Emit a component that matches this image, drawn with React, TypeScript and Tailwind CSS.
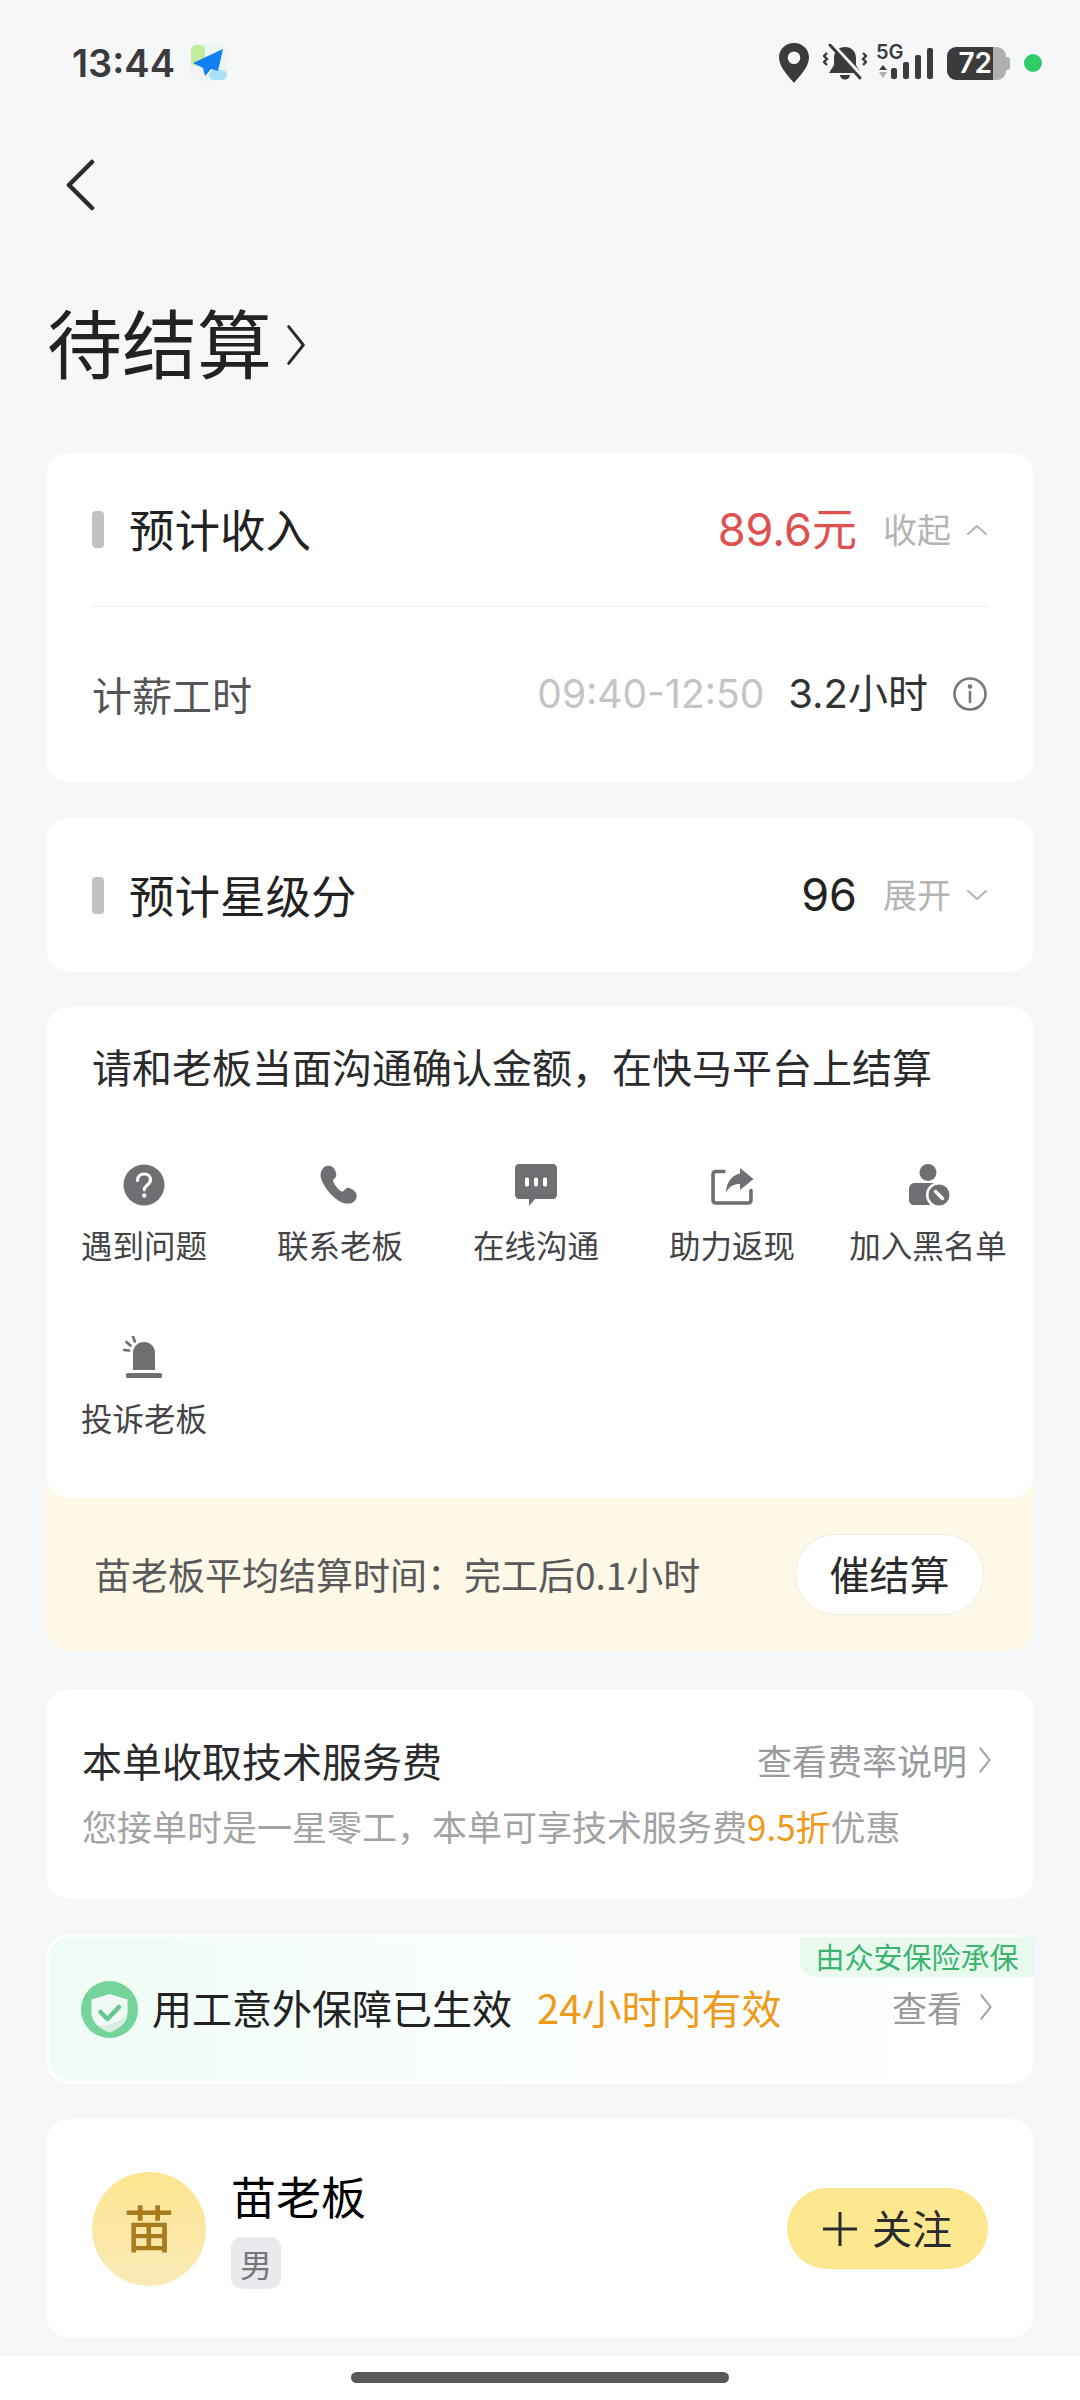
import React from 'react';

const FONT = '"Noto Sans CJK SC", "Noto Sans", sans-serif';

const Chevron = ({ className }: { className: string }) => (
  <svg viewBox="0 0 12 24" fill="none" stroke="currentColor" strokeWidth="1.6" strokeLinecap="round" strokeLinejoin="round" className={className}>
    <path d="M2 2l8 10-8 10" />
  </svg>
);

const Fold = ({ up }: { up?: boolean }) => (
  <svg viewBox="0 0 22 12" fill="none" stroke="#b4b4b6" strokeWidth="2" strokeLinecap="round" strokeLinejoin="round" className="w-[22px] h-[12px]">
    <path d={up ? 'M2 10l9-8 9 8' : 'M2 2l9 8 9-8'} />
  </svg>
);

const SectionTitle = ({ text }: { text: string }) => (
  <div className="flex items-center">
    <div className="w-[12px] h-[37px] rounded-[4px] bg-[#c1c2c6]" />
    <span className="ml-[25px] -mt-[3px] text-[45.500px] leading-[60px] text-[#222222]">{text}</span>
  </div>
);

const actionIcons: Record<string, React.ReactNode> = {
  question: (
    <>
      <circle cx="22" cy="22" r="20.500" fill="#6e6f73" />
      <path d="M15.500 17.500c0-4 3-6.500 6.700-6.500s6.300 2.400 6.300 5.700c0 5.300-6.200 5.200-6.200 10" fill="none" stroke="#fff" strokeWidth="3.200" strokeLinecap="round" />
      <circle cx="22.300" cy="32.500" r="2.200" fill="#fff" />
    </>
  ),
  phone: (
    <path d="M2.700 10C3.500 6.500 6 3.500 8.700 3c2.500-.5 5 .2 6.300 1.300 2 2 3.300 5.200 3.300 7.700 0 2-1.500 3.500-3.300 5 .2 1.800 1 3.500 2 5 1.800 2.800 4 5 6.700 6.700 1.800-.5 3.300-2 5-3.700 2.200-.5 4.500 .5 6.700 2.200 1.800 1.300 3.300 3 3.300 5.800 0 3.300-2.500 6-5 7-2.500.8-5.800 .8-8.300 0-4-1.300-9.800-5.500-13.700-10C7.500 25 4.500 20 3 15.500c-.5-1.800-.6-3.800-.3-5.500z" fill="#6e6f73" />
  ),
  chat: (
    <>
      <path d="M5 1h34c2.200 0 4 1.800 4 4v27c0 2.200-1.800 4-4 4H21l-6 7v-7H5c-2.200 0-4-1.800-4-4V5c0-2.200 1.800-4 4-4z" fill="#6e6f73" />
      <rect x="11" y="14.500" width="4" height="9" rx="1.500" fill="#fff" />
      <rect x="20" y="14.500" width="4" height="9" rx="1.500" fill="#fff" />
      <rect x="29" y="14.500" width="4" height="9" rx="1.500" fill="#fff" />
    </>
  ),
  share: (
    <>
      <path d="M14 8.500H6C4 8.500 3 9.500 3 11.500v25.500C3 39 4 40 6 40h32c2 0 3-1 3-3V27.500" fill="none" stroke="#6e6f73" strokeWidth="3.600" strokeLinecap="round" />
      <path d="M30 5l13.500 11L30 27v-6c-6 0-11 2-14 9 0-9 5-18 14-19.500z" fill="#6e6f73" />
    </>
  ),
  block: (
    <>
      <circle cx="22" cy="9.500" r="8.500" fill="#6e6f73" />
      <path d="M9 20h20c5 0 8 2 8 6v16H8c-3 0-5-2-5-5V26c0-3.500 2.500-6 6-6z" fill="#6e6f73" />
      <circle cx="33" cy="32" r="13" fill="#fff" />
      <circle cx="33" cy="32" r="10.500" fill="#6e6f73" />
      <path d="M29.500 28.500l7 7" stroke="#fff" strokeWidth="3.400" strokeLinecap="round" />
    </>
  ),
  alarm: (
    <>
      <path d="M11 34V17.500C11 10.500 15.500 6 22 6s11 4.500 11 11.500V34H11z" fill="#6e6f73" />
      <rect x="4" y="37" width="36" height="5" rx="1.500" fill="#6e6f73" />
      <path d="M10 1.500l1.800 5M3.500 7l4 3.500M1 15l5 .5" stroke="#6e6f73" strokeWidth="2.600" strokeLinecap="round" transform="translate(1 -1)" />
    </>
  ),
};

const actions = [
  { label: '遇到问题', icon: 'question' },
  { label: '联系老板', icon: 'phone' },
  { label: '在线沟通', icon: 'chat' },
  { label: '助力返现', icon: 'share' },
  { label: '加入黑名单', icon: 'block' },
  { label: '投诉老板', icon: 'alarm' },
];

const StatusBar = () => (
  <div className="h-[126px] pl-[72px] pr-[38px] flex items-center justify-between">
    <div className="flex items-center">
      <span className="text-[38px] leading-[44px] font-semibold text-[#3b3b3d]" style={{ fontFamily: 'Inter, sans-serif' }}>13:44</span>
      {/* app notification icon */}
      <svg viewBox="0 0 38 38" className="ml-[15px] w-[38px] h-[38px]">
        <rect x="0" y="0" width="37" height="37" rx="8" fill="#eef4f6" />
        <rect x="1" y="1" width="14" height="21" rx="5" fill="#c3ec9e" />
        <rect x="19" y="26" width="18" height="10" rx="5" fill="#a9e2f6" />
        <path d="M33 5L3 19l10 5 2 8 6-7 7 2z" fill="#1080f2" />
      </svg>
    </div>
    <div className="flex items-center">
      <svg viewBox="0 0 30 40" className="w-[30px] h-[40px]">
        <path fillRule="evenodd" fill="#3b3b3d" d="M15 0c8.500 0 15 6.300 15 14.500C30 24 20 34 15 40 10 34 0 24 0 14.500 0 6.300 6.500 0 15 0zm0 8.500a6.300 6.300 0 100 12.600 6.300 6.300 0 000-12.600z" />
      </svg>
      <svg viewBox="0 0 44 38" className="ml-[14px] w-[44px] h-[38px]">
        <path d="M22 3c6.500 0 11 4.500 11 11v7l5 8H6l5-8v-7c0-6.500 4.500-11 11-11zM17 31h10c0 2.500-2.200 4.500-5 4.500s-5-2-5-4.500z" fill="#3b3b3d" />
        <path d="M9 1l32 34" stroke="#f6f7f9" strokeWidth="5" />
        <path d="M7 1l30 33" stroke="#3b3b3d" strokeWidth="3" strokeLinecap="round" />
        <path d="M4 9l-3 3 3 3-3 3 3 3M40 9l3 3-3 3 3 3-3 3" fill="none" stroke="#3b3b3d" strokeWidth="2.400" />
      </svg>
      <div className="ml-[9px] relative w-[57px] h-[38px]">
        <svg viewBox="0 0 57 38" className="w-[57px] h-[38px]">
          <path d="M7 21l4 5H3z" fill="#3b3b3d" />
          <path d="M3 28h8l-4 6z" fill="#b0b0b2" />
          <rect x="15" y="24" width="6" height="11" rx="2" fill="#3b3b3d" />
          <rect x="27" y="18" width="6" height="17" rx="2" fill="#3b3b3d" />
          <rect x="39" y="11" width="6" height="24" rx="2" fill="#3b3b3d" />
          <rect x="51" y="4" width="6" height="31" rx="2" fill="#3b3b3d" />
        </svg>
        <span className="absolute left-0 top-[-3px] text-[20px] leading-[22px] font-semibold text-[#3b3b3d]" style={{ fontFamily: 'Inter, sans-serif' }}>5G</span>
      </div>
      <div className="ml-[14px] w-[63px] h-[33px] flex">
        <div className="w-[46px] rounded-l-[9px] bg-[#3b3b3d] text-white text-[28px] leading-[33px] font-semibold text-right pr-[1px]" style={{ fontFamily: 'Inter, sans-serif' }}>72</div>
        <div className="w-[13px] rounded-r-[9px] bg-[#b0b0b2]" />
        <div className="w-[4px] h-[13px] mt-[10px] rounded-r-[3px] bg-[#b0b0b2]" />
      </div>
      <div className="ml-[14px] w-[18px] h-[18px] rounded-full bg-[#2fcb69]" />
    </div>
  </div>
);

const App: React.FC = () => {
  return (
    <div className="w-[1080px] h-[2400px] bg-[#f6f7f9] flex flex-col overflow-hidden" style={{ fontFamily: FONT }}>
      <StatusBar />

      {/* Nav */}
      <div className="h-[118px] pl-[65px] flex items-center">
        <svg viewBox="0 0 30 52" fill="none" stroke="#2b2b2d" strokeWidth="4.500" strokeLinecap="round" strokeLinejoin="round" className="w-[30px] h-[52px]">
          <path d="M27 3L4 26l23 23" />
        </svg>
      </div>

      {/* Title */}
      <div className="h-[209px] pl-[47px] pb-[15px] flex items-center">
        <span className="text-[75px] leading-[90px] text-[#222222]">待结算</span>
        <Chevron className="ml-[13px] mt-[8px] w-[22px] h-[44px] text-[#2b2b2d]" />
      </div>

      <div className="px-[46px] flex flex-col gap-[36px]">
        {/* 预计收入 */}
        <div className="h-[329px] bg-white rounded-[24px]">
          <div className="h-[154px] mx-[46px] flex items-center justify-between border-b border-[#efeff1]">
            <SectionTitle text="预计收入" />
            <div className="flex items-center">
              <span className="text-[45px] leading-[60px] text-[#e0504f]" style={{ fontFamily: 'Inter, "Noto Sans CJK SC", sans-serif' }}>89.6元</span>
              <span className="ml-[26px] -mt-[2px] text-[34px] leading-[48px] text-[#b4b4b6]">收起</span>
              <span className="ml-[15px] flex"><Fold up /></span>
            </div>
          </div>
          <div className="h-[175px] mx-[46px] pb-[2px] flex items-center justify-between">
            <span className="text-[40px] leading-[52px] text-[#555558]">计薪工时</span>
            <div className="flex items-center">
              <span className="text-[39px] leading-[52px] text-[#c4c4c6]" style={{ fontFamily: 'Inter, sans-serif' }}>09:40-12:50</span>
              <span className="ml-[24px] text-[40px] leading-[52px] text-[#333335]" style={{ fontFamily: 'Inter, "Noto Sans CJK SC", sans-serif' }}>3.2小时</span>
              <svg viewBox="0 0 36 36" fill="none" stroke="#77787c" strokeWidth="2.600" strokeLinecap="round" className="ml-[24px] w-[36px] h-[36px]">
                <circle cx="18" cy="18" r="15.500" />
                <path d="M18 16v10" />
                <circle cx="18" cy="10.500" r="1" fill="#77787c" />
              </svg>
            </div>
          </div>
        </div>

        {/* 预计星级分 */}
        <div className="h-[154px] px-[46px] bg-white rounded-[24px] flex items-center justify-between">
          <SectionTitle text="预计星级分" />
          <div className="flex items-center">
            <span className="text-[45px] leading-[60px] text-[#222222]" style={{ fontFamily: 'Inter, sans-serif' }}>96</span>
            <span className="ml-[26px] -mt-[2px] text-[34px] leading-[48px] text-[#b4b4b6]">展开</span>
            <span className="ml-[15px] flex"><Fold /></span>
          </div>
        </div>

        {/* 结算操作 */}
        <div className="-mt-[1px] rounded-[24px] bg-[#fef8e6]">
          <div className="h-[491px] bg-white rounded-[24px]">
            <div className="h-[156px] pl-[46px] pt-[30px] text-[40px] leading-[58px] text-[#2b2b2d]">请和老板当面沟通确认金额，在快马平台上结算</div>
            <div className="grid grid-cols-5 w-[980px] gap-y-[63px]">
              {actions.map(a => (
                <div key={a.label} className="h-[110px] flex flex-col items-center">
                  <svg viewBox="0 0 44 44" className="w-[44px] h-[44px]">{actionIcons[a.icon]}</svg>
                  <span className="mt-[16px] text-[31.500px] leading-[42px] text-[#444447] whitespace-nowrap">{a.label}</span>
                </div>
              ))}
            </div>
          </div>
          <div className="h-[153px] pl-[48px] pr-[50px] flex items-center justify-between">
            <span className="text-[37px] leading-[48px] -mt-[2px] text-[#59595b]">苗老板平均结算时间：完工后0.1小时</span>
            <div className="w-[189px] h-[81px] pb-[3px] rounded-full bg-white border border-[#efece3] flex items-center justify-center text-[40px] text-[#2b2b2d]">催结算</div>
          </div>
        </div>
      </div>

      <div className="px-[46px] mt-[38px] flex flex-col gap-[35px]">
        {/* 技术服务费 */}
        <div className="h-[210px] bg-white rounded-[24px] pl-[36px] pr-[42px] pt-[44px]">
          <div className="flex items-center justify-between h-[54px]">
            <span className="text-[40px] leading-[54px] text-[#2b2b2d]">本单收取技术服务费</span>
            <div className="flex items-center">
              <span className="text-[35px] leading-[48px] text-[#9a9a9d]">查看费率说明</span>
              <Chevron className="ml-[11px] w-[14px] h-[28px] text-[#9a9a9d]" />
            </div>
          </div>
          <div className="mt-[14px] text-[35px] leading-[50px] text-[#a3a3a6]">
            您接单时是一星零工，本单可享技术服务费<span className="text-[#f09a1a]">9.5折</span>优惠
          </div>
        </div>

        {/* 意外保障 */}
        <div className="relative h-[150px] rounded-[24px] border-[3px] border-white bg-gradient-to-r from-[#f0fcf6] via-[#fafefc] to-white flex items-center pl-[32px] pr-[38px]">
          <div className="absolute right-[-3px] top-[0px] h-[40px] w-[234px] rounded-bl-[16px] bg-[#e8f9ee] text-[29px] leading-[38px] text-center text-[#3cb46e]">由众安保险承保</div>
          <svg viewBox="0 0 57 57" className="w-[57px] h-[57px] shrink-0">
            <circle cx="28.500" cy="28.500" r="28.500" fill="#74d49a" />
            <path d="M28.500 13l18 5.500v13c0 10-8 16-18 20-10-4-18-10-18-20v-13z" fill="#f1f9f4" />
            <path d="M46 33c-2 9-9 15-17.500 18.500-4-1.500-8-4-11-7C28 45 39 41 46 33z" fill="#d9eee1" />
            <path d="M19.500 31l7 7L38 26" fill="none" stroke="#62c78f" strokeWidth="4.500" strokeLinecap="round" strokeLinejoin="round" />
          </svg>
          <span className="ml-[14px] -mt-[5px] text-[40px] leading-[54px] text-[#222222]">用工意外保障已生效</span>
          <span className="ml-[25px] -mt-[5px] text-[40px] leading-[54px] text-[#f09a1a]">24小时内有效</span>
          <div className="ml-auto -mt-[4px] flex items-center">
            <span className="text-[35px] leading-[48px] text-[#9a9a9d]">查看</span>
            <Chevron className="ml-[17px] w-[14px] h-[28px] text-[#9a9a9d]" />
          </div>
        </div>

        {/* 老板信息 */}
        <div className="h-[219px] bg-white rounded-[24px] pl-[46px] pr-[46px] flex items-center">
          <div className="w-[114px] h-[114px] pb-[4px] rounded-full bg-gradient-to-b from-[#fde58f] to-[#faeab8] flex items-center justify-center text-[50px] font-medium text-[#a97b1f]">苗</div>
          <div className="ml-[25px] flex flex-col items-start">
            <span className="text-[45px] leading-[60px] -mt-[3px] text-black">苗老板</span>
            <span className="mt-[11px] w-[50px] h-[52px] rounded-[10px] bg-[#e9e9ee] flex items-center justify-center text-[32px] text-[#77777b]">男</span>
          </div>
          <div className="ml-auto w-[201px] h-[81px] pb-[3px] rounded-full bg-[#fde78f] flex items-center justify-center">
            <svg viewBox="0 0 34 34" stroke="#2b2b2d" strokeWidth="3" className="w-[34px] h-[34px] mt-[3px]">
              <path d="M0 17h34M17 0v34" />
            </svg>
            <span className="ml-[15px] text-[40px] leading-[50px] text-[#2b2b2d]">关注</span>
          </div>
        </div>
      </div>

      {/* Home indicator */}
      <div className="mt-auto h-[44px] bg-white flex justify-center pt-[16px]">
        <div className="w-[378px] h-[11px] rounded-full bg-[#59595b]" />
      </div>
    </div>
  );
};

export default App;
